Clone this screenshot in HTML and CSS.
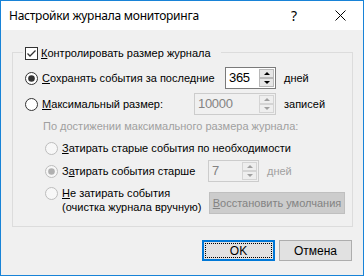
FILE: index.html
```html
<!DOCTYPE html>
<html>
<head>
<meta charset="utf-8">
<link rel="stylesheet" href="styles.css">
</head>
<body>
<div class="window">
  <div class="titlebar">
    <span class="title">Настройки журнала мониторинга</span>
    <span class="cap help">?</span>
    <span class="cap close"><svg width="11" height="11" viewBox="0 0 11 11"><path d="M0.5 0.5 L10.5 10.5 M10.5 0.5 L0.5 10.5" stroke="#000" stroke-width="1" fill="none"/></svg></span>
  </div>
  <div class="client">
    <div class="group">
      <div class="legend">
        <svg class="box" width="13" height="13" viewBox="0 0 13 13"><rect x="0.5" y="0.5" width="12" height="12" fill="#fff" stroke="#333"/><path d="M2.5 6.5 L5 9 L10.5 3.5" stroke="#333" stroke-width="1.3" fill="none"/></svg>
        <span class="lbl"><u>К</u>онтролировать размер журнала</span>
      </div>
      <div class="row r1">
        <svg class="radio" width="13" height="13" viewBox="0 0 13 13"><circle cx="6.5" cy="6.5" r="6" fill="#fff" stroke="#333"/><circle cx="6.5" cy="6.5" r="3.3" fill="#333"/></svg>
        <span class="lbl grow"><u>С</u>охранять события за последние</span>
        <div class="spin focus w51"><span class="val">365</span><span class="arrows"><span class="ab"><i class="up"></i></span><span class="ab"><i class="dn"></i></span></span></div>
        <span class="unit">дней</span>
      </div>
      <div class="row r2">
        <svg class="radio" width="13" height="13" viewBox="0 0 13 13"><circle cx="6.5" cy="6.5" r="6" fill="#fff" stroke="#333"/></svg>
        <span class="lbl grow"><u>М</u>аксимальный размер:</span>
        <div class="spin dis w82"><span class="val">10000</span><span class="arrows"><span class="ab"><i class="up"></i></span><span class="ab"><i class="dn"></i></span></span></div>
        <span class="unit">записей</span>
      </div>
      <div class="note">По достижении максимального размера журнала:</div>
      <div class="row sub r3">
        <svg class="radio" width="13" height="13" viewBox="0 0 13 13"><circle cx="6.5" cy="6.5" r="6" fill="#f7f7f7" stroke="#bcbcbc"/></svg>
        <span class="lbl"><u>З</u>атирать старые события по необходимости</span>
      </div>
      <div class="row sub r4">
        <svg class="radio" width="13" height="13" viewBox="0 0 13 13"><circle cx="6.5" cy="6.5" r="6" fill="#f7f7f7" stroke="#bcbcbc"/><circle cx="6.5" cy="6.5" r="3.3" fill="#b0b0b0"/></svg>
        <span class="lbl w146">З<u>а</u>тирать события старше</span>
        <div class="spin dis2 w51"><span class="val">7</span><span class="arrows"><span class="ab"><i class="up"></i></span><span class="ab"><i class="dn"></i></span></span></div>
        <span class="unit grey">дней</span>
      </div>
      <div class="row sub r5">
        <svg class="radio" width="13" height="13" viewBox="0 0 13 13"><circle cx="6.5" cy="6.5" r="6" fill="#f7f7f7" stroke="#bcbcbc"/></svg>
        <span class="lbl two"><u>Н</u>е затирать события<br>(очистка журнала вручную)</span>
        <span class="btn disabled"><u>В</u>осстановить умолчания</span>
      </div>
    </div>
    <div class="buttons">
      <span class="btn def"><span class="focusring">OK</span></span>
      <span class="btn">Отмена</span>
    </div>
  </div>
</div>
</body>
</html>
```
FILE: styles.css
```css
html, body { margin: 0; padding: 0; }
body { width: 364px; height: 276px; overflow: hidden; font-family: "Liberation Sans", Arial, sans-serif; font-size: 11px; color: #000; }
.window { width: 364px; height: 276px; box-sizing: border-box; border: 1px solid #1883d7; background: #f0f0f0; display: flex; flex-direction: column; }
.titlebar { height: 29px; background: #fff; display: flex; align-items: center; flex: none; }
.title { font-family: "Noto Sans", sans-serif; font-size: 12px; padding-left: 8px; flex: 1; white-space: nowrap; letter-spacing: -0.25px; }
.cap { width: 46px; height: 29px; display: flex; align-items: center; justify-content: center; }
.help { font-family: "Noto Sans", sans-serif; font-size: 14px; }
.client { flex: 1; padding: 0 10px 0 11px; display: flex; flex-direction: column; }
.group { margin-top: 22px; height: 175px; box-sizing: border-box; border: 1px solid #dcdcdc; padding: 0 0 0 12px; display: flex; flex-direction: column; }
.legend { margin: -7px 0 0 -2px; align-self: flex-start; background: #f0f0f0; padding: 0 10px 0 2px; height: 14px; display: flex; align-items: center; gap: 3px; }
.legend .box { flex: none; }
.row { display: flex; align-items: center; }
.radio { flex: none; margin-right: 4px; }
.lbl { white-space: nowrap; }
.grow { flex: 1; }
.r1 { height: 22px; margin-top: 7px; }
.r2 { height: 22px; margin-top: 4px; }
.unit { width: 68px; margin-left: 8px; flex: none; }
.unit.grey { color: #a0a0a0; width: auto; }
.note { color: #a0a0a0; margin: 5px 0 0 18px; line-height: 13px; white-space: nowrap; }
.sub { padding-left: 20px; }
.r3 { height: 20px; margin-top: 5px; }
.r4 { height: 22px; margin-top: 2px; }
.r5 { align-items: flex-start; margin-top: 5px; }
.two { line-height: 14px; margin-top: -1px; }
.w146 { width: 146px; flex: none; }
.spin { height: 22px; box-sizing: border-box; border: 1px solid #7a7a7a; background: #fff; display: flex; flex: none; }
.w51 { width: 51px; }
.w82 { width: 82px; }
.spin .val { flex: 1; padding-left: 3px; font-size: 13px; line-height: 20px; letter-spacing: -0.3px; }
.spin.dis, .spin.dis2 { border-color: #cccccc; background: #f0f0f0; }
.spin.dis .val, .spin.dis2 .val { color: #838383; }
.arrows { width: 15px; display: flex; flex-direction: column; padding: 1px 1px 1px 0; }
.ab { flex: 1; border: 1px solid #b8b8b8; background: #e6e6e6; display: flex; align-items: center; justify-content: center; }
.dis .ab, .dis2 .ab { border-color: #d4d4d4; background: #eeeeee; }
.up { width: 0; height: 0; border-left: 3px solid transparent; border-right: 3px solid transparent; border-bottom: 3px solid #000; }
.dn { width: 0; height: 0; border-left: 3px solid transparent; border-right: 3px solid transparent; border-top: 3px solid #000; }
.dis .up, .dis2 .up { border-bottom-color: #a0a0a0; }
.dis .dn, .dis2 .dn { border-top-color: #a0a0a0; }
.btn { width: 73px; height: 21px; box-sizing: border-box; border: 1px solid #adadad; background: #e1e1e1; display: flex; align-items: center; justify-content: center; white-space: nowrap; }
.btn.disabled { width: 136px; margin: 5px 7px 0 auto; background: #cccccc; border-color: #bfbfbf; color: #838383; height: 22px; }
.buttons { display: flex; justify-content: flex-end; gap: 4px; margin-top: 13px; padding-right: 1px; }
.buttons .btn { font-size: 12px; }
.btn.def { border: 2px solid #0078d7; padding: 1px; }
.focusring { flex: 1; align-self: stretch; border: 1px dotted #000; display: flex; align-items: center; justify-content: center; }
u { text-decoration: underline; text-underline-offset: 1px; }
```
